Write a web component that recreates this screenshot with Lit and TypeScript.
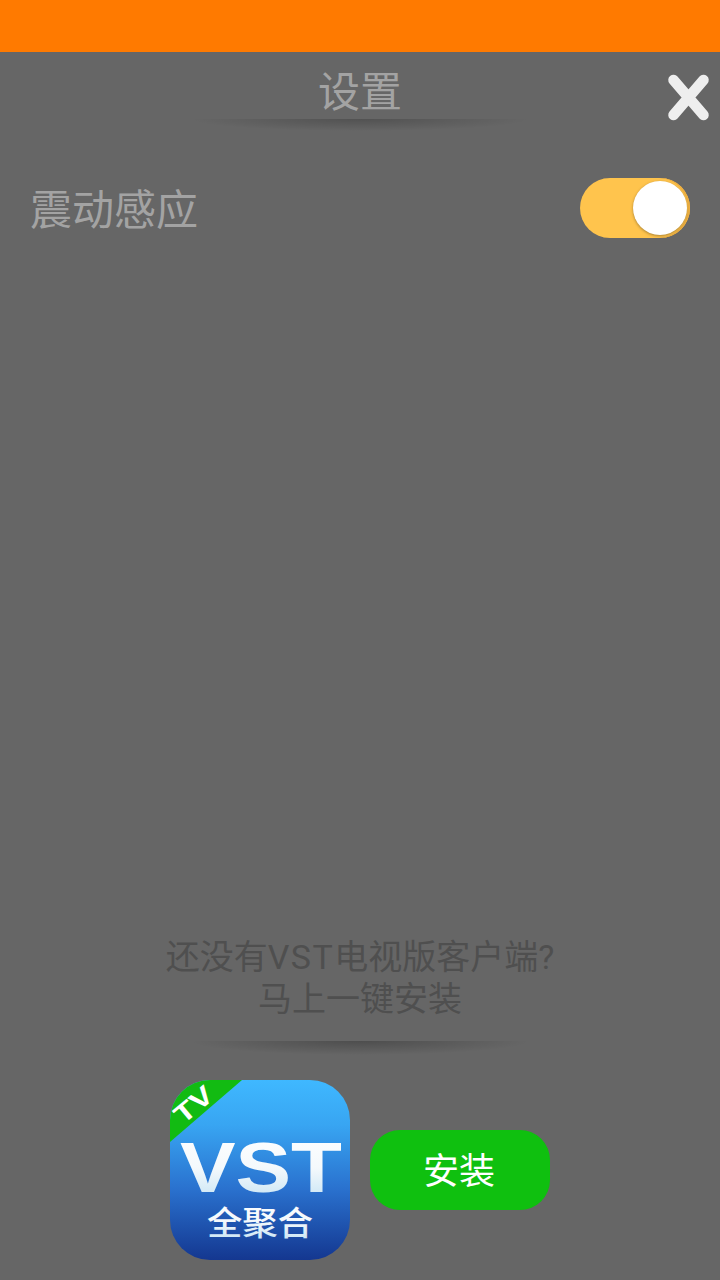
import { LitElement, html, css, svg } from "lit";
import { customElement } from "lit/decorators.js";

@customElement("app-root")
export class AppRoot extends LitElement {
  static styles = css`
    :host {
      display: block;
      width: 720px;
      height: 1280px;
      overflow: hidden;
      background: #666666;
      font-family: Roboto, "Noto Sans CJK SC", sans-serif;
    }
    .page { position: relative; display: flex; flex-direction: column; height: 1280px; }
    .status { height: 52px; background: #ff7a00; flex: none; }
    .header { height: 68px; display: flex; flex-direction: column; align-items: center; flex: none; }
    .title { height: 67px; line-height: 81px; font-size: 42px; color: #a3a3a3; }
    .shade {
      width: 340px; height: 12px; flex: none;
      background: radial-gradient(ellipse 50% 100% at 50% 0, rgba(0,0,0,.2), rgba(0,0,0,0));
    }
    .close { position: absolute; left: 665px; top: 72px; width: 48px; height: 52px; }
    .row {
      margin-top: 58px; height: 60px; padding: 0 30px;
      display: flex; align-items: center; justify-content: space-between; flex: none;
    }
    .row-label { font-size: 42px; color: #a3a3a3; padding-bottom: 4px; }
    .switch {
      position: relative; width: 110px; height: 60px; border-radius: 30px;
      background: #ffc44d; box-shadow: inset -2px 0 0 #f0b040;
    }
    .knob {
      position: absolute; right: 3px; top: 3px; width: 54px; height: 54px; border-radius: 50%;
      background: #fff; box-shadow: 0 1px 3px rgba(0,0,0,.35);
    }
    .spacer { flex: 1; }
    .promo {
      font-size: 34px; line-height: 42px; color: #4f4f4f; text-align: center; flex: none;
    }
    .latin { letter-spacing: 1.5px; }
    .bottom-shade {
      margin: 21px auto 0; height: 14px;
      background: radial-gradient(ellipse 50% 100% at 50% 0, rgba(0,0,0,.24), rgba(0,0,0,0));
    }
    .install {
      margin-top: 25px; margin-bottom: 20px; display: flex; justify-content: center;
      align-items: center; gap: 20px; flex: none;
    }
    .logo { width: 180px; height: 180px; display: block; }
    .btn {
      width: 180px; height: 80px; border-radius: 30px; background: #0fc00f; box-sizing: border-box;
      padding: 0 2px 4px 0;
      color: #fff; font-size: 36px; display: flex; align-items: center; justify-content: center;
    }
  `;

  private logo() {
    return svg`
      <defs>
        <linearGradient id="bg" x1="0" y1="0" x2="0" y2="1">
          <stop offset="0" stop-color="#3fb8ff" />
          <stop offset=".25" stop-color="#38a5f2" />
          <stop offset=".6" stop-color="#2a72cf" />
          <stop offset="1" stop-color="#143790" />
        </linearGradient>
        <linearGradient id="ink" x1="0" y1="0" x2="0" y2="1">
          <stop offset="0" stop-color="#ffffff" />
          <stop offset=".5" stop-color="#f4f9fc" />
          <stop offset="1" stop-color="#bfe0f2" />
        </linearGradient>
        <clipPath id="round"><rect width="180" height="180" rx="40" /></clipPath>
      </defs>
      <g clip-path="url(#round)">
        <rect width="180" height="180" fill="url(#bg)" />
        <polygon points="0,0 72,0 0,62" fill="#12bb12" />
        <text x="0" y="0" transform="translate(13 45) rotate(-40)" font-family="Liberation Sans, sans-serif"
          font-weight="700" font-size="26" fill="#fff" textLength="42" lengthAdjust="spacingAndGlyphs">TV</text>
        <text x="10" y="112" font-family="Liberation Sans, sans-serif" font-weight="700" font-size="70"
          fill="url(#ink)" textLength="162" lengthAdjust="spacingAndGlyphs">VST</text>
        <text x="37" y="155" font-family="Noto Sans CJK SC, sans-serif" font-weight="500" font-size="33"
          fill="url(#ink)" textLength="106" lengthAdjust="spacingAndGlyphs">全聚合</text>
      </g>
    `;
  }

  render() {
    return html`
      <div class="page">
        <div class="status"></div>
        <div class="header">
          <div class="title">设置</div>
          <div class="shade"></div>
        </div>
        <svg class="close" viewBox="0 0 48 52">
          <path d="M8.5 8 L38.5 43 M38.5 8 L8.5 43" stroke="#eeeeee" stroke-width="10.5" stroke-linecap="round" fill="none" />
        </svg>
        <div class="row">
          <div class="row-label">震动感应</div>
          <div class="switch"><div class="knob"></div></div>
        </div>
        <div class="spacer"></div>
        <div class="promo">还没有<span class="latin">VST</span>电视版客户端?<br />马上一键安装</div>
        <div class="shade bottom-shade"></div>
        <div class="install">
          <svg class="logo" viewBox="0 0 180 180">${this.logo()}</svg>
          <div class="btn">安装</div>
        </div>
      </div>
    `;
  }
}
